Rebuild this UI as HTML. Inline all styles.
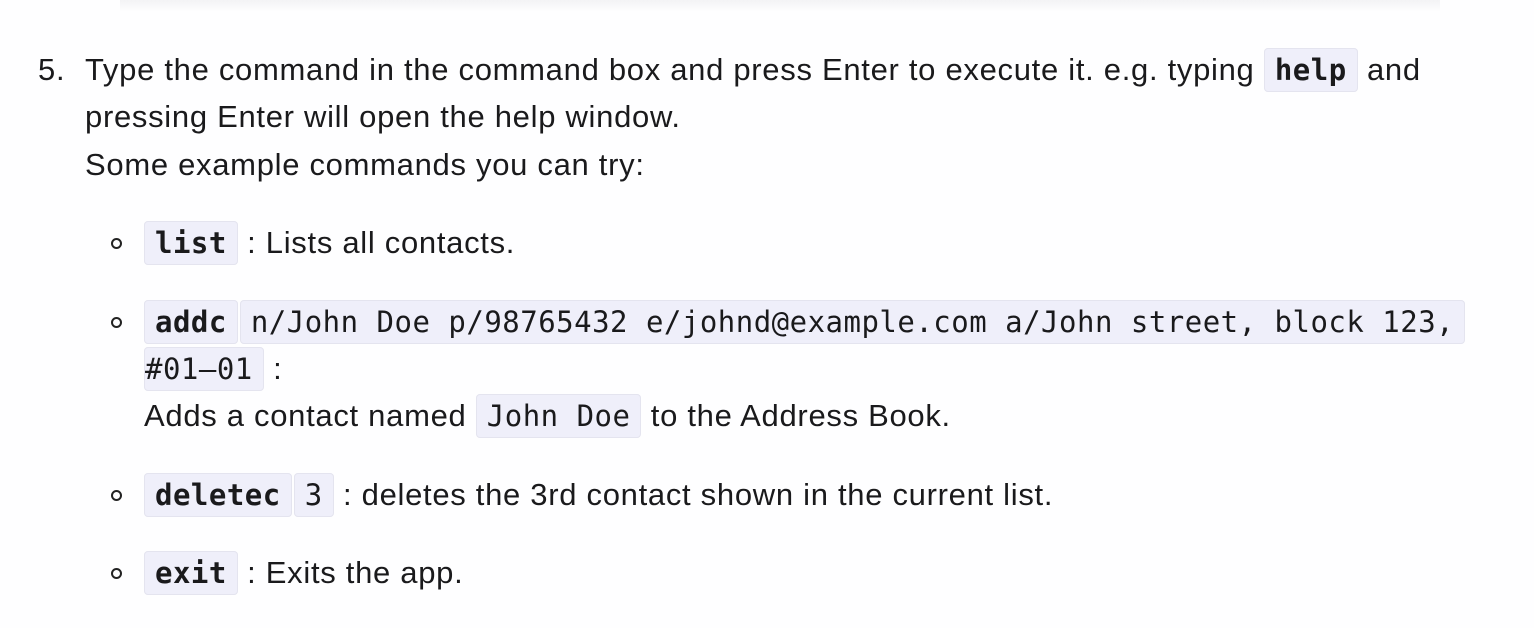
<!DOCTYPE html>
<html><head><meta charset="utf-8"><style>
body{margin:0;width:1534px;height:628px;background:#fefeff;position:relative;overflow:hidden;font-family:"Liberation Sans","DejaVu Sans",sans-serif;font-size:31px;letter-spacing:0.7px;color:#1a1a1c}
.l{position:absolute;height:48px;line-height:48px;white-space:nowrap}
code{font-family:"DejaVu Sans Mono","Liberation Mono",monospace;font-size:29px;background:#efeffa;border:1.5px solid #e4e4ef;border-radius:4px;padding:4px 10px;letter-spacing:0.5px}
b{font-weight:bold}
.dot{position:absolute;width:7px;height:7px;border:2px solid #222;border-radius:50%}
.top{position:absolute;left:120px;top:0;width:1320px;height:12px;background:linear-gradient(#f3f3f5,#fefeff)}
</style></head><body>
<div class="top"></div>
<div class="l" style="left:38px;top:46px">5.</div>
<div class="l" style="left:85px;top:46px">Type the command in the command box and press Enter to execute it. e.g. typing <code><b>help</b></code> and</div>
<div class="l" style="left:85px;top:93px">pressing Enter will open the help window.</div>
<div class="l" style="left:85px;top:141px">Some example commands you can try:</div>

<div class="dot" style="left:111px;top:238px"></div>
<div class="l" style="left:144px;top:219px"><code><b>list</b></code> : Lists all contacts.</div>

<div class="dot" style="left:111px;top:317px"></div>
<div class="l" style="left:144px;top:298px"><code><b>addc</b></code><code style="margin-left:2px">n/John Doe p/98765432 e/johnd@example.com a/John street, block 123,</code></div>
<div class="l" style="left:144px;top:345px"><code style="padding-left:0">#01–01</code> :</div>
<div class="l" style="left:144px;top:392px">Adds a contact named <code>John Doe</code> to the Address Book.</div>

<div class="dot" style="left:111px;top:490px"></div>
<div class="l" style="left:144px;top:471px"><code><b>deletec</b></code><code style="margin-left:2px">3</code> : deletes the 3rd contact shown in the current list.</div>

<div class="dot" style="left:111px;top:568px"></div>
<div class="l" style="left:144px;top:549px"><code><b>exit</b></code> : Exits the app.</div>
</body></html>
